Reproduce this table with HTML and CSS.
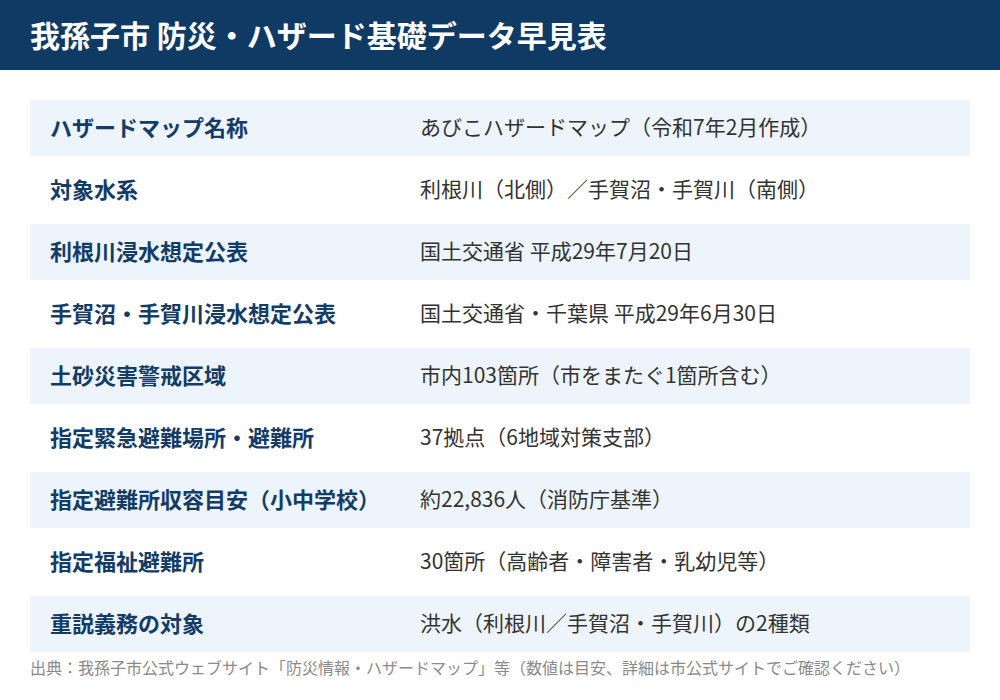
FILE: index.html
```html
<!DOCTYPE html>
<html lang="ja">
<head>
<meta charset="utf-8">
<title>我孫子市 防災・ハザード基礎データ早見表</title>
<link rel="stylesheet" href="styles.css">
</head>
<body>
<header class="header">
  <h1 class="title">我孫子市 防災・ハザード基礎データ早見表</h1>
</header>
<main class="content">
  <div class="table">
    <div class="row shaded"><div class="label">ハザードマップ名称</div><div class="value">あびこハザードマップ（令和7年2月作成）</div></div>
    <div class="row"><div class="label">対象水系</div><div class="value">利根川（北側）／手賀沼・手賀川（南側）</div></div>
    <div class="row shaded"><div class="label">利根川浸水想定公表</div><div class="value">国土交通省 平成29年7月20日</div></div>
    <div class="row"><div class="label">手賀沼・手賀川浸水想定公表</div><div class="value">国土交通省・千葉県 平成29年6月30日</div></div>
    <div class="row shaded"><div class="label">土砂災害警戒区域</div><div class="value">市内103箇所（市をまたぐ1箇所含む）</div></div>
    <div class="row"><div class="label">指定緊急避難場所・避難所</div><div class="value">37拠点（6地域対策支部）</div></div>
    <div class="row shaded"><div class="label">指定避難所収容目安（小中学校）</div><div class="value">約22,836人（消防庁基準）</div></div>
    <div class="row"><div class="label">指定福祉避難所</div><div class="value">30箇所（高齢者・障害者・乳幼児等）</div></div>
    <div class="row shaded"><div class="label">重説義務の対象</div><div class="value">洪水（利根川／手賀沼・手賀川）の2種類</div></div>
  </div>
  <p class="source">出典：我孫子市公式ウェブサイト「防災情報・ハザードマップ」等（数値は目安、詳細は市公式サイトでご確認ください）</p>
</main>
</body>
</html>
```
FILE: styles.css
```css
* { box-sizing: border-box; }
html, body {
  margin: 0;
  padding: 0;
  background: #ffffff;
  font-family: "Noto Sans CJK JP", "Noto Sans", sans-serif;
}
.header {
  height: 70px;
  background: #0f3a64;
  display: flex;
  align-items: center;
  padding: 0 30px 2px;
}
.title {
  margin: 0;
  color: #ffffff;
  font-size: 30px;
  font-weight: 700;
  letter-spacing: 0;
  line-height: 1;
}
.content {
  padding: 30px 30px 0;
}
.table {
  display: flex;
  flex-direction: column;
  gap: 6px;
}
.row {
  display: grid;
  grid-template-columns: 370px 1fr;
  align-items: center;
  height: 56px;
  padding: 0 20px 4px;
}
.row.shaded {
  background: #edf4fb;
}
.label {
  color: #143c66;
  font-size: 22px;
  font-weight: 700;
  line-height: 1;
}
.value {
  color: #333333;
  font-size: 21px;
  font-weight: 400;
  line-height: 1;
}
.source {
  margin: 4px 0 0;
  color: #8a8a8a;
  font-size: 16px;
  line-height: 22px;
}
```
